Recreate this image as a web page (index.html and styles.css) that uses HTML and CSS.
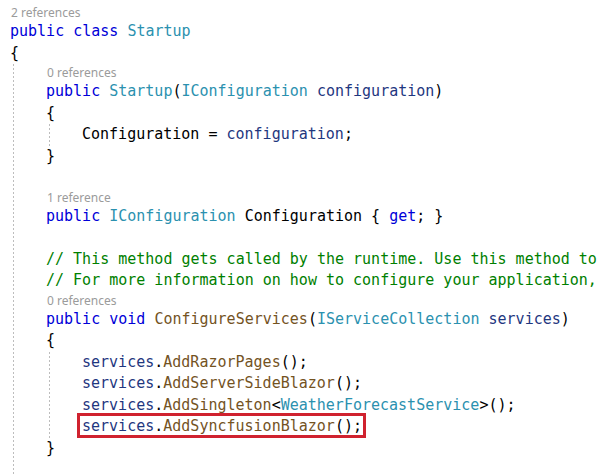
FILE: index.html
```html
<!DOCTYPE html>
<html>
<head>
<meta charset="utf-8">
<link rel="stylesheet" href="styles.css">
</head>
<body>
<div class="editor">
  <div class="lens">2 references</div>
  <div class="line"><span class="kw">public</span> <span class="kw">class</span> <span class="type">Startup</span></div>
  <div class="line">{</div>
  <div class="block outer">
    <div class="lens">0 references</div>
    <div class="line"><span class="kw">public</span> <span class="type">Startup</span>(<span class="type">IConfiguration</span> <span class="param">configuration</span>)</div>
    <div class="line">{</div>
    <div class="block">
      <div class="line">Configuration = <span class="param">configuration</span>;</div>
    </div>
    <div class="line">}</div>
    <div class="line"></div>
    <div class="lens">1 reference</div>
    <div class="line"><span class="kw">public</span> <span class="type">IConfiguration</span> Configuration { <span class="kw">get</span>; }</div>
    <div class="line"></div>
    <div class="line comment">// This method gets called by the runtime. Use this method to</div>
    <div class="line comment">// For more information on how to configure your application,</div>
    <div class="lens">0 references</div>
    <div class="line"><span class="kw">public</span> <span class="kw">void</span> <span class="method">ConfigureServices</span>(<span class="type">IServiceCollection</span> <span class="param">services</span>)</div>
    <div class="line">{</div>
    <div class="block">
      <div class="line"><span class="param">services</span>.<span class="method">AddRazorPages</span>();</div>
      <div class="line"><span class="param">services</span>.<span class="method">AddServerSideBlazor</span>();</div>
      <div class="line"><span class="param">services</span>.<span class="method">AddSingleton</span>&lt;<span class="type">WeatherForecastService</span>&gt;();</div>
      <div class="line"><span class="highlight"><span class="param">services</span>.<span class="method">AddSyncfusionBlazor</span>();</span></div>
    </div>
    <div class="line">}</div>
  </div>
</div>
</body>
</html>
```
FILE: styles.css
```css
html, body {
  margin: 0;
  padding: 0;
  background: #ffffff;
  height: 475px;
  overflow: hidden;
}

.editor {
  display: flex;
  flex-direction: column;
  height: 475px;
  box-sizing: border-box;
  padding: 4px 0 0 10px;
  font-family: "DejaVu Sans Mono", "Liberation Mono", monospace;
  font-size: 15px;
  color: #000000;
}

.line {
  height: 21.5px;
  line-height: 21.5px;
  white-space: pre;
}

.lens {
  height: 17px;
  line-height: 17px;
  font-family: "Noto Sans", "Open Sans", sans-serif;
  font-size: 12px;
  color: #9b9b9b;
  white-space: pre;
  padding-left: 1px;
}

.block {
  margin-left: 3px;
  padding-left: 33px;
  background-image: linear-gradient(#bdbdbd 50%, transparent 50%);
  background-size: 1px 4px;
  background-repeat: repeat-y;
  background-position: 0 0;
}

.block.outer {
  flex: 1;
}

.kw { color: #0000d8; }
.type { color: #2b91af; }
.param { color: #1f377f; }
.method { color: #74531f; }
.comment { color: #008000; }

.highlight {
  position: relative;
}

.highlight::after {
  content: "";
  position: absolute;
  left: -5px;
  right: -4px;
  top: -4px;
  bottom: -3px;
  border: 3px solid #d0222f;
}
```
